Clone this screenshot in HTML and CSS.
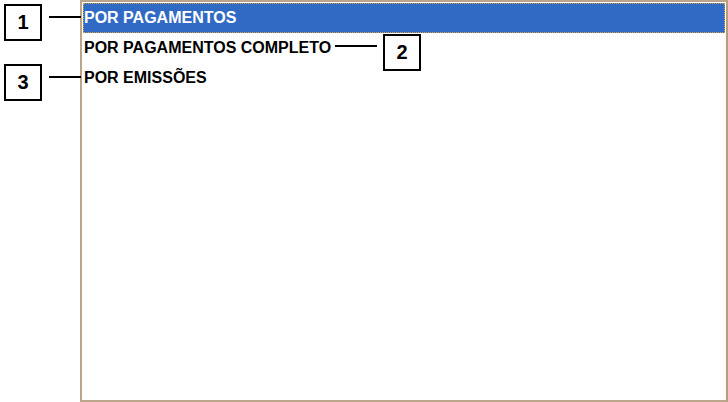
FILE: index.html
```html
<!DOCTYPE html>
<html>
<head>
<meta charset="utf-8">
<link rel="stylesheet" href="styles.css">
</head>
<body>
<div class="stage">
  <div class="listbox">
    <div class="item selected">POR PAGAMENTOS</div>
    <div class="item">POR PAGAMENTOS COMPLETO</div>
    <div class="item">POR EMISSÕES</div>
  </div>

  <div class="callout c1"><span class="num">1</span></div>
  <div class="leader l1"></div>
  <div class="callout c2"><span class="num">2</span></div>
  <div class="leader l2"></div>
  <div class="callout c3"><span class="num">3</span></div>
  <div class="leader l3"></div>
</div>
</body>
</html>
```

FILE: styles.css
```css
html, body {
  margin: 0;
  padding: 0;
  background: #ffffff;
}

.stage {
  position: relative;
  width: 728px;
  height: 402px;
  display: flex;
  font-family: "Liberation Sans", Arial, sans-serif;
}

.listbox {
  margin-left: 80px;
  width: 648px;
  height: 402px;
  box-sizing: border-box;
  border: 2px solid #bba68c;
  border-right-color: #b39e83;
  background: #ffffff;
  padding: 1px;
  display: flex;
  flex-direction: column;
}

.item {
  height: 30px;
  line-height: 28px;
  box-sizing: border-box;
  padding-left: 0;
  border: 1px solid transparent;
  font-weight: bold;
  font-size: 16px;
  color: #000000;
  white-space: nowrap;
}

.item.selected {
  background: #316ac5;
  color: #ffffff;
  border: 1px dotted #d9a040;
}

.callout {
  position: absolute;
  width: 38px;
  height: 37px;
  box-sizing: border-box;
  border: 2px solid #000000;
  background: #ffffff;
  display: flex;
  align-items: center;
  justify-content: center;
}

.num {
  font-weight: bold;
  font-size: 20px;
  color: #000000;
}

.c1 { left: 4px; top: 4px; }
.c2 { left: 383px; top: 34px; }
.c3 { left: 4px; top: 64px; }

.leader {
  position: absolute;
  height: 2px;
  background: #000000;
}

.l1 { left: 49px; top: 16px; width: 32px; }
.l2 { left: 335px; top: 45px; width: 42px; }
.l3 { left: 49px; top: 76px; width: 32px; }
```
